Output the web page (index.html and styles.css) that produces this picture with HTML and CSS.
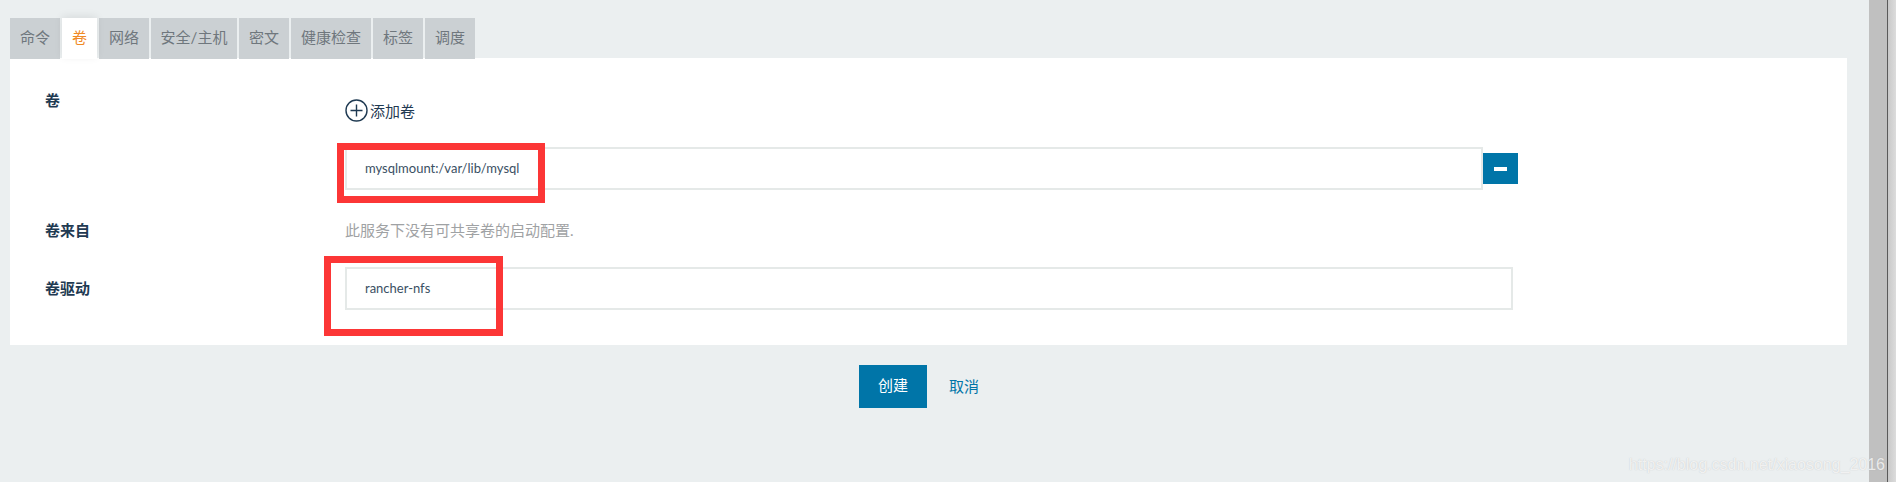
FILE: index.html
```html
<!DOCTYPE html>
<html lang="zh">
<head>
  <meta charset="UTF-8">
  <title>添加服务</title>
  <link rel="stylesheet" href="styles.css">
</head>
<body>

  <div class="pagina">
    <div class="principal">
      <div class="pestanas">
        <div class="pestana">命令</div>
        <div class="pestana activa">卷</div>
        <div class="pestana">网络</div>
        <div class="pestana">安全/主机</div>
        <div class="pestana">密文</div>
        <div class="pestana">健康检查</div>
        <div class="pestana">标签</div>
        <div class="pestana">调度</div>
      </div>

      <div class="panel">
        <div class="fila fila-volumen">
          <div class="etiqueta etiqueta-alta">卷</div>
          <div class="campo">
            <div class="agregar">
              <svg class="icono-mas" width="23" height="23" viewBox="0 0 23 23">
                <circle cx="11.5" cy="11.5" r="10.5" fill="none" stroke="#1f3a52" stroke-width="1.4"/>
                <path d="M11.5 5.5v12M5.5 11.5h12" fill="none" stroke="#1f3a52" stroke-width="1.4"/>
              </svg>
              <span>添加卷</span>
            </div>
            <div class="grupo">
              <div class="entrada">mysqlmount:/var/lib/mysql</div>
              <div class="quitar"><span class="menos"></span></div>
            </div>
          </div>
        </div>

        <div class="fila fila-desde">
          <div class="etiqueta">卷来自</div>
          <div class="campo ayuda">此服务下没有可共享卷的启动配置.</div>
        </div>

        <div class="fila">
          <div class="etiqueta">卷驱动</div>
          <div class="campo campo-ancho">
            <div class="entrada">rancher-nfs</div>
          </div>
        </div>
      </div>

      <div class="acciones">
        <div class="boton">创建</div>
        <div class="cancelar">取消</div>
      </div>
    </div>

    <div class="barra"></div>
  </div>

  <!-- marcas rojas encima de la captura -->
  <div class="marca marca-uno"></div>
  <div class="marca marca-dos"></div>
  <div class="sello">https://blog.csdn.net/xiaosong_2016</div>

</body>
</html>
```

FILE: styles.css
```css
* {
  box-sizing: border-box;
}

html, body {
  height: 100%;
}

body {
  margin: 0;
  overflow: hidden;
  background-color: #ebeff0;
  color: #1f3a52;
  font-family: Lato, "Noto Sans CJK SC", sans-serif;
  font-size: 15px;
}

.pagina {
  display: flex;
  height: 482px;
}

.principal {
  flex: 1;
  padding: 18px 22px 0 10px;
}

.pestanas {
  display: flex;
  gap: 2px;
  height: 41px;
}

.pestana {
  width: 50px;
  height: 41px;
  line-height: 39px;
  text-align: center;
  background-color: #cbd0d3;
  color: #6f777d;
  font-size: 15px;
  white-space: nowrap;
}

.pestana:nth-child(2) { width: 35px; }
.pestana:nth-child(4) { width: 86px; }
.pestana:nth-child(6) { width: 80px; }

.pestana.activa {
  position: relative;
  background-color: #fff;
  color: #f08a24;
  box-shadow: 0 -2px 8px rgba(0, 0, 0, 0.08);
}

.panel {
  height: 287px;
  margin-top: -1px;
  padding-top: 29px;
  background-color: #fff;
}

.fila {
  display: flex;
}

.etiqueta {
  width: 335px;
  padding-left: 35px;
  font-weight: 700;
  line-height: 43px;
}

.etiqueta-alta {
  line-height: 26px;
}

.campo {
  width: 1173px;
}

.campo-ancho {
  width: 1168px;
}

.agregar {
  display: flex;
  align-items: center;
  gap: 2px;
  height: 36px;
  margin-top: 5px;
}

.grupo {
  display: flex;
  align-items: center;
  margin-top: 19px;
}

.entrada {
  flex: 1;
  height: 43px;
  padding-left: 18px;
  border: 2px solid #e5e9e8;
  color: #3a4f63;
  line-height: 39px;
  font-size: 13px;
}

.quitar {
  display: flex;
  align-items: center;
  justify-content: center;
  width: 35px;
  height: 31px;
  background-color: #0075a8;
}

.menos {
  width: 13px;
  height: 4px;
  background-color: #fff;
}

.fila-desde {
  margin: 19px 0 15px;
}

.ayuda {
  line-height: 43px;
  color: #9fa2a4;
}

.acciones {
  display: flex;
  align-items: center;
  gap: 22px;
  margin-top: 20px;
  padding-left: 849px;
}

.boton {
  width: 68px;
  height: 43px;
  line-height: 41px;
  text-align: center;
  background-color: #0075a8;
  color: #fff;
}

.cancelar {
  margin-top: -3px;
  color: #0075a8;
}

.barra {
  width: 27px;
  background: linear-gradient(to right, #c0c0c0 0 18px, #5a5a5a 18px 19px, #c9c9c9 19px, #dcdcdc);
}

.marca {
  position: absolute;
  border: 7px solid #fc3636;
}

.marca-uno {
  left: 337px;
  top: 143px;
  width: 208px;
  height: 60px;
}

.marca-dos {
  left: 324px;
  top: 256px;
  width: 179px;
  height: 80px;
}

.sello {
  position: absolute;
  right: 11px;
  bottom: 8px;
  color: rgba(255, 255, 255, 0.75);
  font-family: "Liberation Sans", sans-serif;
  font-size: 16px;
  text-shadow: 0 0 1px rgba(150, 150, 150, 0.5);
}
```
